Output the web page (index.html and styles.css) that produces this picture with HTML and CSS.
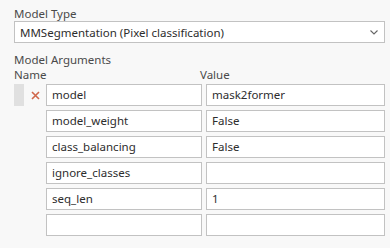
FILE: index.html
```html
<!DOCTYPE html>
<html lang="en">
<head>
  <meta charset="UTF-8">
  <title>Model Arguments</title>
  <link rel="stylesheet" href="styles.css">
</head>
<body>
  <div class="panel">
    <label class="field-label">Model Type</label>
    <div class="select-box">
      <span>MMSegmentation (Pixel classification)</span>
      <svg class="chevron" width="8" height="5" viewBox="0 0 8 5">
        <path d="M0.5 0.5 L4 4 L7.5 0.5" fill="none" stroke="#666" stroke-width="1.1"/>
      </svg>
    </div>

    <label class="field-label section">Model Arguments</label>
    <div class="args-head">
      <span class="head-name">Name</span>
      <span class="head-value">Value</span>
    </div>

    <div class="args">
      <div class="arg-row">
        <div class="handle selected"></div>
        <div class="remove">
          <svg width="9" height="9" viewBox="0 0 9 9">
            <path d="M1 1 L8 8 M8 1 L1 8" stroke="#d0664a" stroke-width="1.6"/>
          </svg>
        </div>
        <div class="cell name">model</div>
        <div class="cell value">mask2former</div>
      </div>
      <div class="arg-row">
        <div class="handle"></div>
        <div class="remove"></div>
        <div class="cell name">model_weight</div>
        <div class="cell value">False</div>
      </div>
      <div class="arg-row">
        <div class="handle"></div>
        <div class="remove"></div>
        <div class="cell name">class_balancing</div>
        <div class="cell value">False</div>
      </div>
      <div class="arg-row">
        <div class="handle"></div>
        <div class="remove"></div>
        <div class="cell name">ignore_classes</div>
        <div class="cell value"></div>
      </div>
      <div class="arg-row">
        <div class="handle"></div>
        <div class="remove"></div>
        <div class="cell name">seq_len</div>
        <div class="cell value">1</div>
      </div>
      <div class="arg-row">
        <div class="handle"></div>
        <div class="remove"></div>
        <div class="cell name"></div>
        <div class="cell value"></div>
      </div>
    </div>
  </div>
</body>
</html>
```

FILE: styles.css
```css
* {
  box-sizing: border-box;
  margin: 0;
  padding: 0;
}
html, body {
  height: 100%;
  background-color: #f8f8f8;
  font-family: 'Noto Sans', 'Open Sans', sans-serif;
  font-size: 11.5px;
}
.panel {
  padding: 6px 5px 0 14px;
}
.field-label {
  display: block;
  color: #4a4a4a;
  line-height: 15px;
}
.field-label.section {
  margin-top: 9px;
}
.select-box {
  display: flex;
  align-items: center;
  justify-content: space-between;
  height: 22px;
  padding: 0 5px 0 5px;
  background: white;
  border: 1px solid #c2c2c2;
  color: #2d2d2d;
}
.chevron {
  margin-right: 1px;
}
.args-head {
  display: flex;
  color: #4a4a4a;
  line-height: 15px;
  margin-bottom: 2px;
}
.head-name {
  width: 186px;
}
.args {
  display: flex;
  flex-direction: column;
  gap: 4px;
}
.arg-row {
  display: flex;
  align-items: stretch;
  height: 22px;
}
.handle {
  width: 10px;
}
.handle.selected {
  background: #e0e0e0;
}
.remove {
  width: 22px;
  display: flex;
  align-items: center;
  justify-content: center;
}
.cell {
  height: 22px;
  background: white;
  border: 1px solid #c2c2c2;
  padding: 0 5px;
  color: #2d2d2d;
  line-height: 20px;
  white-space: nowrap;
}
.cell.name {
  width: 156px;
  margin-right: 4px;
}
.cell.value {
  width: 179px;
}
```
